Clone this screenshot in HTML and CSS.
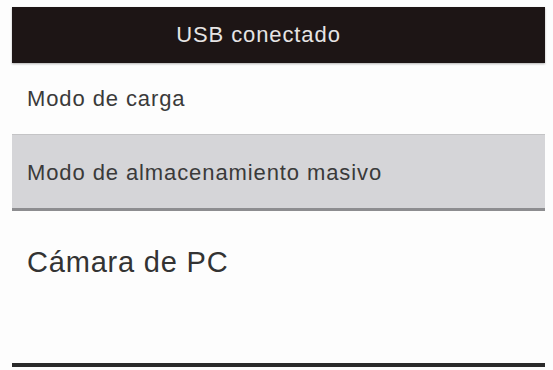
FILE: index.html
```html
<!DOCTYPE html>
<html>
<head>
<meta charset="utf-8">
<link rel="stylesheet" href="styles.css">
</head>
<body>
<div class="screen">
  <div class="header">USB conectado</div>
  <div class="item">Modo de carga</div>
  <div class="item selected">Modo de almacenamiento masivo</div>
  <div class="item large">Cámara de PC</div>
  <div class="spacer"></div>
  <div class="bottom-line"></div>
</div>
</body>
</html>
```
FILE: styles.css
```css
html, body {
  margin: 0;
  padding: 0;
  background: #fdfdfd;
}
body {
  width: 553px;
  height: 370px;
  overflow: hidden;
  font-family: "Liberation Sans", Arial, sans-serif;
}
.screen {
  display: flex;
  flex-direction: column;
  margin: 7px 8px 0 12px;
  height: 363px;
}
.header {
  flex: none;
  height: 56px;
  background: #1d1515;
  color: #e6e4e4;
  font-size: 22px;
  letter-spacing: 0.9px;
  display: flex;
  align-items: center;
  justify-content: center;
  padding-right: 40px;
  box-shadow: 0 1px 2px rgba(0,0,0,0.3);
}
.item {
  flex: none;
  box-sizing: border-box;
  height: 71px;
  display: flex;
  align-items: center;
  padding-left: 15px;
  font-size: 22px;
  letter-spacing: 0.9px;
  color: #3a3a3a;
}
.item.selected {
  height: 77px;
  background: #d5d5d8;
  border-top: 1px solid #c4c4c6;
  border-bottom: 3px solid #8d8d90;
  padding-top: 3px;
}
.item.large {
  height: 102px;
  font-size: 29px;
  letter-spacing: 0.8px;
  color: #333;
}
.spacer {
  flex: 1;
}
.bottom-line {
  flex: none;
  height: 4px;
  background: #2a2a2a;
  margin-bottom: 3px;
}
```
